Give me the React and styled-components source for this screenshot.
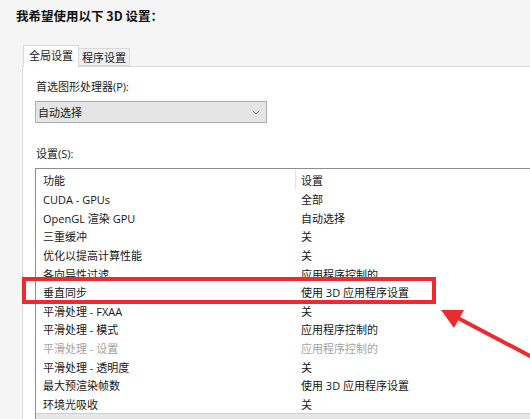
import styled, { createGlobalStyle } from "styled-components";

const GlobalStyle = createGlobalStyle`
  html, body { margin: 0; padding: 0; background: #f5f5f5; }
  body { font-family: "Open Sans", "Noto Sans CJK SC", sans-serif; color: #1b1b1b; }
`;

const Page = styled.div`
  position: relative;
  width: 530px;
  height: 419px;
  overflow: hidden;
  background: #f5f5f5;
  display: flex;
  flex-direction: column;
  padding-top: 7px;
  box-sizing: border-box;
`;

const Title = styled.div`
  padding-left: 16px;
  font-family: "Noto Sans CJK SC", sans-serif;
  font-weight: 700;
  font-size: 12.5px;
  line-height: 18px;
  color: #111;
`;

const TabStrip = styled.div`
  display: flex;
  align-items: flex-end;
  margin: 20px 0 0 23px;
  height: 21px;
`;

const Tab = styled.div`
  position: relative;
  z-index: ${(p) => (p.active ? 2 : 1)};
  box-sizing: border-box;
  height: ${(p) => (p.active ? "22px" : "18px")};
  margin-bottom: ${(p) => (p.active ? "-1px" : "0")};
  padding: 0 ${(p) => (p.active ? "5px" : "3px")};
  background: ${(p) => (p.active ? "#fff" : "#f0f0f0")};
  border: 1px solid #d9d9d9;
  border-bottom: ${(p) => (p.active ? "none" : "1px solid #d9d9d9")};
  border-left: ${(p) => (p.active ? "1px solid #d9d9d9" : "none")};
  font-family: "Noto Sans CJK SC", sans-serif;
  font-size: 11px;
  line-height: ${(p) => (p.active ? "19px" : "16px")};
  white-space: nowrap;
`;

const Panel = styled.div`
  flex: 1;
  margin-left: 22px;
  background: #fff;
  border-top: 1px solid #d9d9d9;
  border-left: 1px solid #d9d9d9;
  padding: 12px 0 0 12px;
  display: flex;
  flex-direction: column;
`;

const FieldLabel = styled.div`
  margin-left: 1px;
  font-size: 11px;
  line-height: 16px;
  margin-top: ${(p) => p.gap || 0}px;
  margin-bottom: 6px;
`;

const Select = styled.div`
  box-sizing: border-box;
  width: 232px;
  height: 22px;
  background: #e5e5e5;
  border: 1px solid #adadad;
  display: flex;
  align-items: center;
  justify-content: space-between;
  padding: 0 6px 0 2px;
  font-size: 11px;
`;

const ListBox = styled.div`
  width: 500px;
  border: 1px solid #8e8e8e;
  border-right: none;
  font-size: 11px;
`;

const Row = styled.div`
  display: grid;
  grid-template-columns: 259px 1fr;
  height: ${(p) => (p.header ? "21px" : "18.6px")};
  align-items: center;
  color: ${(p) => (p.disabled ? "#a3a3a3" : "#151515")};
  white-space: nowrap;
`;

const Name = styled.div`
  padding-left: 7px;
`;

const Value = styled.div`
  padding-left: 5px;
  height: 100%;
  display: flex;
  align-items: center;
  border-left: 1px solid ${(p) => (p.header ? "#e3e3e3" : "transparent")};
`;

const ScrollTrack = styled.div`
  height: 10px;
  background: #e6e6e6;
  border-top: 1px solid #d0d0d0;
`;

const Highlight = styled.div`
  position: absolute;
  left: 22px;
  top: 277px;
  width: 414px;
  height: 27px;
  box-sizing: border-box;
  border: 4px solid #ec2a2f;
  pointer-events: none;
`;

const Overlay = styled.svg`
  position: absolute;
  left: 0;
  top: 0;
  pointer-events: none;
`;

const rows = [
  ["CUDA - GPUs", "全部"],
  ["OpenGL 渲染 GPU", "自动选择"],
  ["三重缓冲", "关"],
  ["优化以提高计算性能", "关"],
  ["各向异性过滤", "应用程序控制的"],
  ["垂直同步", "使用 3D 应用程序设置"],
  ["平滑处理 - FXAA", "关"],
  ["平滑处理 - 模式", "应用程序控制的"],
  ["平滑处理 - 设置", "应用程序控制的", true],
  ["平滑处理 - 透明度", "关"],
  ["最大预渲染帧数", "使用 3D 应用程序设置"],
  ["环境光吸收", "关"],
];

export default function App() {
  return (
    <>
      <GlobalStyle />
      <Page>
        <Title>我希望使用以下 3D 设置：</Title>
        <TabStrip>
          <Tab active>全局设置</Tab>
          <Tab>程序设置</Tab>
        </TabStrip>
        <Panel>
          <FieldLabel>首选图形处理器(P):</FieldLabel>
          <Select>
            <span>自动选择</span>
            <svg width="8" height="5" viewBox="0 0 8 5">
              <path d="M0.5 0.5 L4 4 L7.5 0.5" fill="none" stroke="#8a8a8a" strokeWidth="1" />
            </svg>
          </Select>
          <FieldLabel gap={23}>设置(S):</FieldLabel>
          <ListBox>
            <Row header>
              <Name>功能</Name>
              <Value header>设置</Value>
            </Row>
            {rows.map(([name, value, disabled]) => (
              <Row key={name} disabled={disabled}>
                <Name>{name}</Name>
                <Value>{value}</Value>
              </Row>
            ))}
            <ScrollTrack />
          </ListBox>
        </Panel>
        <Highlight />
        <Overlay width="530" height="419" viewBox="0 0 530 419">
          <line x1="456" y1="317" x2="534" y2="358" stroke="#ec2a2f" strokeWidth="4" />
          <polygon points="441,310 464,310 454,328" fill="#ec2a2f" />
        </Overlay>
      </Page>
    </>
  );
}
